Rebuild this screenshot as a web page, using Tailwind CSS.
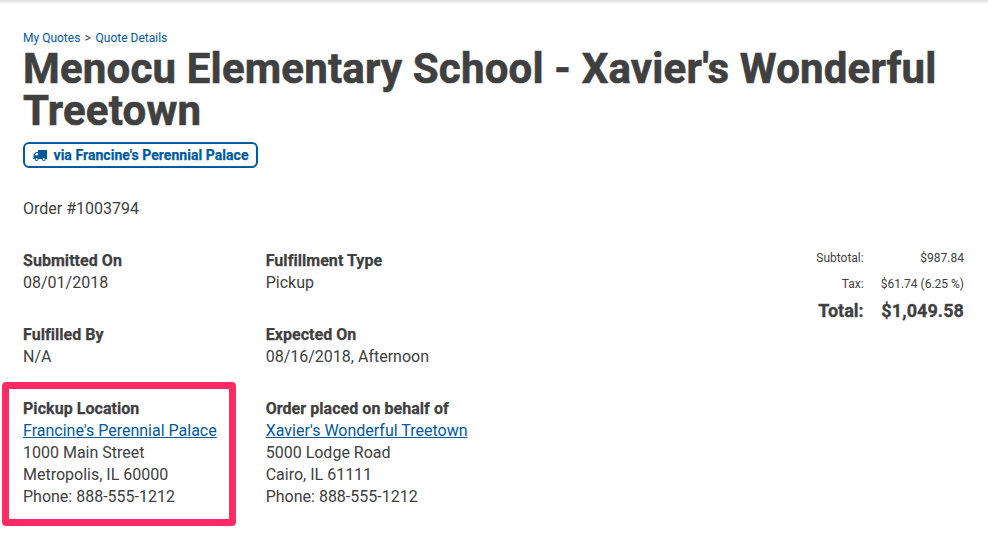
<!DOCTYPE html>
<html lang="en"><head><meta charset="utf-8"><title>Quote Details</title>
<script src="https://cdn.jsdelivr.net/npm/@tailwindcss/browser@4"></script></head>
<body class="bg-white font-['Roboto',sans-serif] text-[#404041] text-base leading-[22px]">
<div class="relative h-[554px] w-[988px] overflow-hidden px-[23px] pt-[30px]">
<div class="absolute inset-x-0 top-0 h-[4px] bg-linear-to-b from-[#dedede] to-white"></div>
<nav class="flex gap-[4.5px] text-xs leading-4"><a class="text-[#005a9f]">My Quotes</a><span>&gt;</span><a class="text-[#005a9f]">Quote Details</a></nav>
<h1 class="mt-0.5 text-[42px] leading-[42px] font-bold tracking-[0.18px] [-webkit-text-stroke:0.6px_#404041]">Menocu Elementary School - Xavier's Wonderful<br>Treetown</h1>
<div class="mt-[10px] flex h-[26px] w-[235px] items-center rounded-md border-2 border-[#005a9f] pl-2 text-sm font-bold tracking-[0.04px] text-[#005a9f] [-webkit-text-stroke:0.25px_#005a9f]">
<svg class="mr-[6.5px] h-[11px] w-[14px] shrink-0" viewBox="0 0 14 11" fill="currentColor" stroke="none"><path fill-rule="evenodd" d="M5.6 0H13.4Q14 0 14 .6V8.4Q14 9 13.3 9H12.7A1.9 1.9 0 0 1 8.9 9H5.5A1.9 1.9 0 0 1 1.7 9H0V8.2L.5 8V5Q.5 4.4 .9 4L2.4 2.5Q2.8 2.1 3.4 2.1H5V.6Q5 0 5.6 0ZM3.4 3.1L1.6 4.9V5.3H5V3.1ZM3.6 8.1A.9.9 0 1 0 3.6 9.9A.9.9 0 1 0 3.6 8.1ZM10.8 8.1A.9.9 0 1 0 10.8 9.9A.9.9 0 1 0 10.8 8.1Z"/></svg>
<span class="whitespace-nowrap">via Francine's Perennial Palace</span></div>
<p class="mt-[30px]">Order #1003794</p>
<div class="mt-[30px] flex">
<div class="grid w-[600px] grid-cols-[242.7px_1fr] gap-y-[30px] [&_b]:tracking-[0.05px] [&_b]:[-webkit-text-stroke:0.25px_#404041]">
<div><b>Submitted On</b><p>08/01/2018</p></div>
<div><b>Fulfillment Type</b><p>Pickup</p></div>
<div><b>Fulfilled By</b><p>N/A</p></div>
<div><b>Expected On</b><p>08/16/2018, Afternoon</p></div>
<div><b>Pickup Location</b><p><a class="text-[#005a9f] underline">Francine's Perennial Palace</a></p><p>1000 Main Street</p><p>Metropolis, IL 60000</p><p>Phone: 888-555-1212</p></div>
<div><b>Order placed on behalf of</b><p><a class="text-[#005a9f] underline">Xavier's Wonderful Treetown</a></p><p>5000 Lodge Road</p><p>Cairo, IL 61111</p><p>Phone: 888-555-1212</p></div>
</div>
<dl class="-mt-px mr-px ml-auto grid h-[76px] grid-cols-[auto_auto] grid-rows-[26px_26px_26px] gap-x-[17px] text-right text-xs leading-[18px]">
<dt>Subtotal:</dt><dd>$987.84</dd><dt>Tax:</dt><dd>$61.74 (6.25 %)</dd>
<dt class="text-lg leading-5 font-bold [-webkit-text-stroke:0.3px_#404041]">Total:</dt><dd class="text-lg leading-5 font-bold tracking-[0.08px] [-webkit-text-stroke:0.3px_#404041]">$1,049.58</dd>
</dl></div>
<div class="absolute top-[382px] left-[2px] h-[144px] w-[234px] rounded-[4px] border-[7px] border-[#ff2a63]"></div>
</div></body></html>
